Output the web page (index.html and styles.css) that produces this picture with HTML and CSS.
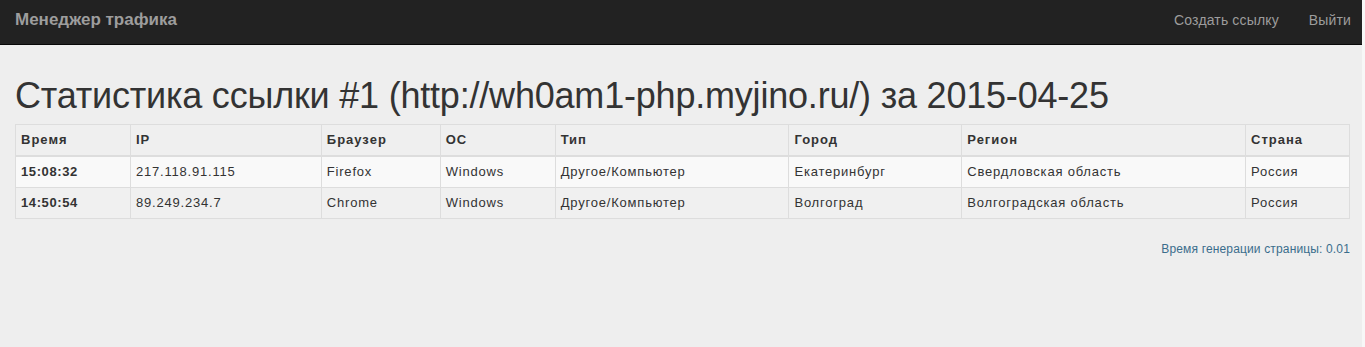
FILE: index.html
```html
<html lang="ru">
<head>
    <meta charset="UTF-8">
    <meta name="viewport" content="width=device-width, initial-scale=1.0">
    <title>Менеджер трафика</title>
    <link rel="stylesheet" href="styles.css">
</head>
<body>
    <div class="navbar">
        <a class="brand" href="#">Менеджер трафика</a>
        <div class="nav-links">
            <a href="#">Создать ссылку</a>
            <a href="#">Выйти</a>
        </div>
    </div>

    <div class="container">
        <h1>Статистика ссылки #1 (http://wh0am1-php.myjino.ru/) за 2015-04-25</h1>

        <table class="stats-table">
            <thead>
                <tr>
                    <th class="col-time">Время</th>
                    <th class="col-ip">IP</th>
                    <th class="col-browser">Браузер</th>
                    <th class="col-os">ОС</th>
                    <th class="col-type">Тип</th>
                    <th class="col-city">Город</th>
                    <th class="col-region">Регион</th>
                    <th class="col-country">Страна</th>
                </tr>
            </thead>
            <tbody>
                <tr>
                    <td><b>15:08:32</b></td>
                    <td>217.118.91.115</td>
                    <td>Firefox</td>
                    <td>Windows</td>
                    <td>Другое/Компьютер</td>
                    <td>Екатеринбург</td>
                    <td>Свердловская область</td>
                    <td>Россия</td>
                </tr>
                <tr>
                    <td><b>14:50:54</b></td>
                    <td>89.249.234.7</td>
                    <td>Chrome</td>
                    <td>Windows</td>
                    <td>Другое/Компьютер</td>
                    <td>Волгоград</td>
                    <td>Волгоградская область</td>
                    <td>Россия</td>
                </tr>
            </tbody>
        </table>

        <p class="gen-time">Время генерации страницы: 0.01</p>
    </div>
</body>
</html>
```

FILE: styles.css
```css
body {
    margin: 0;
    background-color: #eeeeee;
    font-family: "Liberation Sans", Arial, sans-serif;
    color: #333;
    border-right: 3px solid #f7f7f7;
    min-height: 347px;
    box-sizing: border-box;
}
.navbar {
    height: 44px;
    background-color: #222;
    border-bottom: 1px solid #080808;
    display: flex;
    justify-content: space-between;
    align-items: center;
    padding: 0 15px;
    margin-right: -3px;
}
.brand {
    color: #9d9d9d;
    font-size: 17px;
    font-weight: bold;
    text-decoration: none;
    margin-top: -5px;
}
.nav-links {
    display: flex;
    gap: 30px;
    margin-top: -5px;
    margin-right: -1px;
}
.nav-links a {
    color: #9d9d9d;
    font-size: 14px;
    letter-spacing: 0.15px;
    text-decoration: none;
}
.container {
    padding: 0 12px 0 15px;
}
h1 {
    font-size: 36px;
    font-weight: normal;
    line-height: 40px;
    letter-spacing: -0.2px;
    margin: 31px 0 8px 0;
    color: #333;
}
.stats-table {
    width: 100%;
    border-collapse: collapse;
    font-size: 13px;
    letter-spacing: 0.8px;
    border: 1px solid #ddd;
}
.stats-table th, .stats-table td {
    border: 1px solid #ddd;
    padding: 6px 5px;
    line-height: 18px;
    text-align: left;
}
.stats-table th {
    background-color: #efefef;
    border-bottom: 2px solid #ddd;
    font-weight: bold;
    letter-spacing: 1px;
}
.stats-table td b {
    letter-spacing: 0.6px;
}
.stats-table tbody tr:nth-child(odd) {
    background-color: #f9f9f9;
}
.stats-table tbody tr:nth-child(even) {
    background-color: #f0f0f0;
}
.col-time { width: 104px; }
.col-ip { width: 180px; }
.col-browser { width: 108px; }
.col-os { width: 104px; }
.col-type { width: 223px; }
.col-city { width: 162px; }
.col-region { width: 273px; }
.col-country { width: 93px; }
.gen-time {
    text-align: right;
    font-size: 12px;
    letter-spacing: 0.15px;
    color: #3a6d8c;
    margin: 23px 0 0 0;
}
```
